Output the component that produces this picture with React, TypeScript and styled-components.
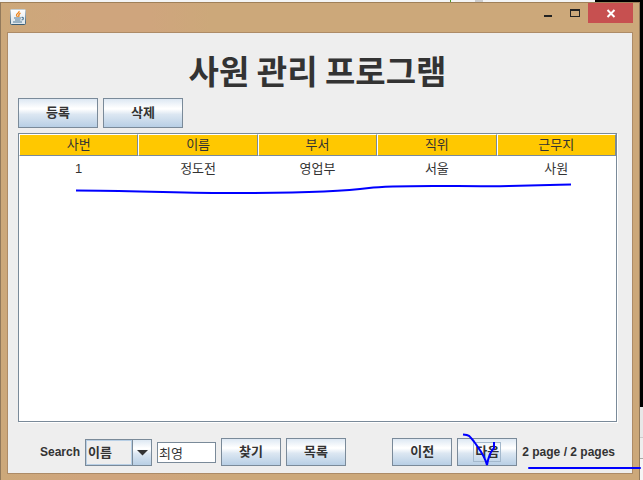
import React from "react";
import styled, { createGlobalStyle } from "styled-components";

const GlobalStyle = createGlobalStyle`
  * { box-sizing: border-box; }
  body { margin: 0; overflow: hidden; }
  body, button, input, select {
    font-family: "Liberation Sans", "Noto Sans CJK KR", sans-serif;
    font-size: 12px;
    color: #333;
  }
`;

const steel = "#7a8a99";
const metal = "linear-gradient(#dde8f3 0%, #fff 33%, #fff 36%, #dce7f2 55%, #b8cfe5 100%)";

const Desktop = styled.div`
  position: relative;
  min-height: 100vh;
  display: grid;
  grid-template-columns: minmax(0, 1fr) 3px;
  grid-template-rows: 2px 1fr;
`;

const BackStrip = styled.div`
  grid-column: 1 / 3;
  background: linear-gradient(90deg, transparent 450px, #4a9b23 450px, #4a9b23 451px, transparent 451px, transparent 475px, #ccc 475px, #ccc 483px, transparent 483px, transparent calc(100% - 48px), #000 calc(100% - 48px)), #f3f4f5;
`;

const BackSide = styled.div`
  background: linear-gradient(#000 405px, #e8e8e8 405px, #e8e8e8 435px, #ccc 435px, #ccc 436px, #eee 436px, #eee 456px, #aaa 456px, #aaa 457px, #f5f5f5 457px);
`;

const Frame = styled.main`
  display: flex;
  flex-direction: column;
  padding: 0 6px 6px;
  border: 1px solid #92795b;
  border-top-color: #9f8059;
  border-bottom: 0;
  background: linear-gradient(90deg, #cca87a 0, #cfa57d 80px, #cfa57d 150px, #cca87a 210px);
`;

const TitleBar = styled.header`
  display: flex;
  align-items: flex-start;
  height: 29px;
  padding-left: 3px;
`;

const JavaIcon = styled.svg`
  width: 16px;
  height: 16px;
  margin-top: 6px;
`;

const WindowControls = styled.div`
  display: flex;
  margin-left: auto;
`;

const WindowButton = styled.button<{ $close?: boolean }>`
  display: grid;
  place-items: center;
  width: ${(p) => (p.$close ? 45 : 27)}px;
  height: 20px;
  padding: 0;
  border: 0;
  background: ${(p) => (p.$close ? "#c75050" : "transparent")};
`;

const Content = styled.section`
  flex: 1;
  display: flex;
  flex-direction: column;
  padding: 0 15px 7px 10px;
  border: 1px solid #ad8b67;
  background: #eee;
`;

const Title = styled.h1`
  margin: 0;
  padding: 13px 0 4px;
  font: bold 33px/48px "Noto Sans CJK KR", sans-serif;
  text-align: center;
`;

const Actions = styled.div`
  display: flex;
  gap: 5px;
`;

const Button = styled.button<{ $wide?: boolean }>`
  width: ${(p) => (p.$wide ? 80 : 60)}px;
  height: ${(p) => (p.$wide ? 30 : 28)}px;
  flex: none;
  padding: 0;
  border: 1px solid ${steel};
  background: ${metal};
  font-size: 13px;
  font-weight: bold;
  line-height: 18px;
`;

const FocusRing = styled.span`
  display: inline-block;
  height: 20px;
  padding: 0 1px;
  border: 1px solid #a3b8cc;
`;

const TablePane = styled.div`
  position: relative;
  flex: 1;
  margin: 5px 0 16px;
  border: 1px solid ${steel};
  box-shadow: 1px 1px 0 #fff;
  background: #fff;
`;

const Table = styled.table`
  width: 100%;
  table-layout: fixed;
  border-collapse: separate;
  border-spacing: 0;
  font-size: 13px;
`;

const HeadCell = styled.th`
  height: 22px;
  padding: 0;
  border: 1px solid ${steel};
  border-top-color: #fff;
  border-left-color: #fff;
  background: #ffc800;
  font-weight: normal;
  line-height: 20px;
`;

const Cell = styled.td`
  height: 26px;
  padding: 0;
  line-height: 26px;
  text-align: center;
`;

const RowStroke = styled.svg`
  position: absolute;
  left: 0;
  top: 44px;
  width: 100%;
  height: 20px;
  pointer-events: none;
`;

const Footer = styled.footer`
  display: flex;
  align-items: center;
  justify-content: space-between;
`;

const SearchForm = styled.form`
  display: flex;
  align-items: center;
  gap: 5px;
  padding-left: 22px;
`;

const Label = styled.label`
  font-weight: bold;
`;

const SelectBox = styled.span`
  display: grid;
  grid-template-columns: minmax(0, 1fr) 19px;
  width: 67px;
  height: 27px;
  border: 1px solid ${steel};
  background: ${metal};
`;

const Select = styled.select`
  grid-area: 1 / 1 / 2 / 3;
  width: 100%;
  padding: 0 20px 0 2px;
  border: 0;
  background: linear-gradient(#eee, #eee) 1px 1px / 44px 23px no-repeat, linear-gradient(#b8cfe5, #b8cfe5) 0 0 / 46px 25px no-repeat;
  appearance: none;
  font-size: 13px;
  font-weight: bold;
`;

const Arrow = styled.svg`
  grid-area: 1 / 2;
  width: 19px;
  height: 25px;
  border-left: 1px solid ${steel};
  pointer-events: none;
`;

const TextInput = styled.input`
  width: 59px;
  height: 21px;
  padding: 0 1px;
  border: 1px solid ${steel};
  background: #fff;
  font-size: 13px;
`;

const Pager = styled.nav`
  display: flex;
  align-items: center;
  gap: 5px;
`;

const Marked = styled.span`
  position: relative;
  display: flex;
`;

const CheckStroke = styled.svg`
  position: absolute;
  left: 4px;
  top: -6px;
  width: 38px;
  height: 36px;
  pointer-events: none;
`;

const PageStroke = styled.svg`
  position: absolute;
  left: 6px;
  top: 20px;
  width: 115px;
  height: 6px;
  pointer-events: none;
`;

const PageCount = styled.strong`
  padding-right: 2px;
  white-space: nowrap;
`;

const columns = ["사번", "이름", "부서", "직위", "근무지"];
const employees = [["1", "정도전", "영업부", "서울", "사원"]];

export default function App() {
  return (
    <Desktop>
      <GlobalStyle />
      <BackStrip />
      <Frame>
        <TitleBar>
          <JavaIcon viewBox="0 0 16 16" aria-hidden="true">
            <defs>
              <linearGradient id="tile" x2="0" y2="1">
                <stop stopColor="#fff" />
                <stop offset="1" stopColor="#dce4e9" />
              </linearGradient>
              <linearGradient id="edge" x2="0" y2="1">
                <stop stopColor="#c5cfd4" />
                <stop offset="1" stopColor="#395d75" />
              </linearGradient>
            </defs>
            <rect x=".5" y=".5" width="15" height="15" rx="1" fill="url(#tile)" stroke="url(#edge)" />
            <path d="M9 2c1 2-3 2.500-2.500 4.500l1 1.500M10.500 4C8 5.500 8.500 6.500 9 8" fill="none" stroke="#ed8217" strokeWidth="1.300" />
            <path d="M4 9h7M5 11h5.500M11.500 8.500c2.500-.5 2.500 2 0 2.500M3 13h9" fill="none" stroke="#527b96" strokeWidth="1.200" />
          </JavaIcon>
          <WindowControls>
            <WindowButton aria-label="Minimize">
              <svg width="27" height="20" aria-hidden="true"><path d="M10 12h8v2h-8z" fill="#222" /></svg>
            </WindowButton>
            <WindowButton aria-label="Maximize">
              <svg width="27" height="20" shapeRendering="crispEdges" aria-hidden="true"><path fillRule="evenodd" d="M9 6h10v8H9zM10 8v5h8V8z" fill="#222" /></svg>
            </WindowButton>
            <WindowButton $close aria-label="Close">
              <svg width="45" height="20" aria-hidden="true"><path d="M19.500 7l7 7M26.500 7l-7 7" stroke="#fff" strokeWidth="2" /></svg>
            </WindowButton>
          </WindowControls>
        </TitleBar>
        <Content>
          <Title>사원 관리 프로그램</Title>
          <Actions>
            <Button $wide type="button">등록</Button>
            <Button $wide type="button">삭제</Button>
          </Actions>
          <TablePane>
            <Table>
              <thead>
                <tr>{columns.map((c) => <HeadCell key={c} scope="col">{c}</HeadCell>)}</tr>
              </thead>
              <tbody>
                {employees.map((row) => (
                  <tr key={row[0]}>{row.map((v, i) => <Cell key={columns[i]}>{v}</Cell>)}</tr>
                ))}
              </tbody>
            </Table>
            <RowStroke viewBox="0 0 597 20" preserveAspectRatio="none" aria-hidden="true">
              <path d="M57 12.500C115 12.500 150 15 210 15S320 14 350 10S450 9 490 8S535 7 552 6.500" fill="none" stroke="#00f" strokeWidth="2" />
            </RowStroke>
          </TablePane>
          <Footer>
            <SearchForm onSubmit={(e) => e.preventDefault()}>
              <Label htmlFor="keyword">Search</Label>
              <SelectBox>
                <Select aria-label="Search field" defaultValue="이름">
                  {columns.map((c) => <option key={c}>{c}</option>)}
                </Select>
                <Arrow viewBox="0 0 18 25" aria-hidden="true"><path d="M4 10h11l-5.500 5.500z" fill="#333" /></Arrow>
              </SelectBox>
              <TextInput id="keyword" defaultValue="최영" />
              <Button type="submit">찾기</Button>
              <Button type="button">목록</Button>
            </SearchForm>
            <Pager aria-label="Pages">
              <Button type="button">이전</Button>
              <Marked>
                <Button type="button"><FocusRing>다음</FocusRing></Button>
                <CheckStroke viewBox="0 0 38 36" aria-hidden="true">
                  <path d="M2 2.500C8 3 8 3 14 11C19 18 24 24 26 33C27 27 30 19 33 16V10" fill="none" stroke="#00f" strokeWidth="2" />
                </CheckStroke>
              </Marked>
              <Marked>
                <PageCount>2 page / 2 pages</PageCount>
                <PageStroke viewBox="0 0 115 6" aria-hidden="true">
                  <path d="M1 3h111" stroke="#00f" strokeWidth="2" strokeLinecap="round" />
                </PageStroke>
              </Marked>
            </Pager>
          </Footer>
        </Content>
      </Frame>
      <BackSide />
    </Desktop>
  );
}
